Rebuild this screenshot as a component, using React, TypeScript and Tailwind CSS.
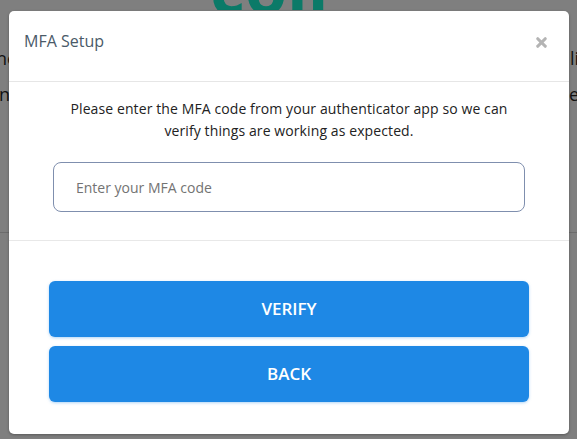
import { X } from "lucide-react";

export default function App() {
  return (
    <div className="relative h-[439px] w-full overflow-hidden bg-[#7f7f7f] font-['Open_Sans',sans-serif]">
      {/* page behind the backdrop */}
      <div className="h-[10px] overflow-hidden pl-[210px]">
        <div className="-mt-[46px] text-[68px] font-bold leading-[68px] text-[#0b7a68]">coll</div>
      </div>
      <div className="mt-[36px] flex justify-between text-[18px] leading-[24px] text-[#111]">
        <span className="-ml-[4px]">he</span>
        <span className="-mr-[2px]">li</span>
      </div>
      <div className="mt-[12px] flex justify-between text-[18px] leading-[24px] text-[#111]">
        <span className="-ml-[1px]">n</span>
        <span className="-mr-[2px]">e</span>
      </div>
      <div className="mt-[126px] border-b border-[#6c6c6c]" />

      {/* modal */}
      <div className="absolute left-[9px] top-[11px] flex h-[423px] w-[560px] flex-col rounded-[5px] bg-white shadow-[0_1px_3px_rgba(0,0,0,0.3)]">
        <div className="flex h-[71px] items-start justify-between border-b border-[#e6e6e6] pl-[15px] pr-[20px] pt-[18px]">
          <h2 className="text-[16px] leading-[24px] text-[#4a5a68]">MFA Setup</h2>
          <button className="mt-[6px] text-[#b4b4b4]">
            <X size={15} strokeWidth={5} />
          </button>
        </div>

        <div className="flex flex-col items-center border-b border-[#e8e8e8] px-[44px] pb-[28px] pt-[16px]">
          <p className="text-center text-[14px] leading-[22px] tracking-[0.1px] text-[#222]">
            Please enter the MFA code from your authenticator app so we can
            <br />
            verify things are working as expected.
          </p>
          <input
            className="mt-[20px] h-[50px] w-full rounded-[8px] border border-[#7f8fae] px-[22px] text-[14px] text-[#222] outline-none placeholder:text-[#737373]"
            placeholder="Enter your MFA code"
          />
        </div>

        <div className="flex flex-col gap-[9px] px-[40px] pt-[40px]">
          <button className="h-[56px] w-full rounded-[6px] bg-[#1e88e5] text-[17px] font-semibold text-white shadow-[0_1px_3px_rgba(30,136,229,0.35)]">
            VERIFY
          </button>
          <button className="h-[56px] w-full rounded-[6px] bg-[#1e88e5] text-[17px] font-semibold text-white shadow-[0_1px_3px_rgba(30,136,229,0.35)]">
            BACK
          </button>
        </div>
      </div>
    </div>
  );
}
